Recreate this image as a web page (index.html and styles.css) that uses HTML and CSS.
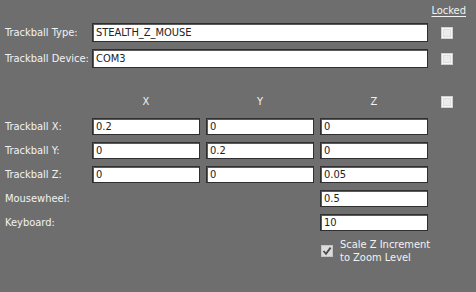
FILE: index.html
```html
<!DOCTYPE html>
<html>
<head>
<meta charset="utf-8">
<link rel="stylesheet" href="styles.css">
</head>
<body>
<div class="panel">
  <div class="locked-row"><span class="locked">Locked</span></div>

  <div class="row top">
    <label class="label">Trackball Type:</label>
    <div class="field wide">STEALTH_Z_MOUSE</div>
    <span class="check disabled"></span>
  </div>
  <div class="row top">
    <label class="label">Trackball Device:</label>
    <div class="field wide">COM3</div>
    <span class="check disabled"></span>
  </div>

  <div class="row head">
    <span class="label"></span>
    <span class="col-head">X</span>
    <span class="col-head">Y</span>
    <span class="col-head">Z</span>
    <span class="check disabled"></span>
  </div>

  <div class="grid">
    <div class="row g">
      <label class="label">Trackball X:</label>
      <div class="field">0.2</div>
      <div class="field">0</div>
      <div class="field">0</div>
    </div>
    <div class="row g">
      <label class="label">Trackball Y:</label>
      <div class="field">0</div>
      <div class="field">0.2</div>
      <div class="field">0</div>
    </div>
    <div class="row g">
      <label class="label">Trackball Z:</label>
      <div class="field">0</div>
      <div class="field">0</div>
      <div class="field">0.05</div>
    </div>
    <div class="row g">
      <label class="label">Mousewheel:</label>
      <span class="spacer"></span>
      <span class="spacer"></span>
      <div class="field">0.5</div>
    </div>
    <div class="row g">
      <label class="label">Keyboard:</label>
      <span class="spacer"></span>
      <span class="spacer"></span>
      <div class="field">10</div>
    </div>
  </div>

  <div class="row scale">
    <span class="label"></span>
    <span class="spacer"></span>
    <span class="spacer"></span>
    <div class="scale-opt">
      <span class="check checked">
        <svg width="10" height="10" viewBox="0 0 10 10"><path d="M1.5 5 L4 7.8 L8.6 1.6" fill="none" stroke="#4a4a4a" stroke-width="1.8"/></svg>
      </span>
      <span class="scale-text">Scale Z Increment<br>to Zoom Level</span>
    </div>
  </div>
</div>
</body>
</html>
```

FILE: styles.css
```css
html, body {
  margin: 0;
  padding: 0;
  background: #6e6e6e;
}

body {
  width: 476px;
  height: 292px;
  overflow: hidden;
  font-family: "DejaVu Sans Condensed", "DejaVu Sans", sans-serif;
  font-stretch: condensed;
  font-size: 11px;
  color: #f2f2f2;
}

.panel {
  display: flex;
  flex-direction: column;
  padding-left: 5px;
}

.locked-row {
  height: 23px;
  display: flex;
  justify-content: flex-end;
  padding-right: 10px;
}

.locked {
  margin-top: 4px;
  text-decoration: underline;
  text-underline-offset: 2px;
  line-height: 13px;
}

.row {
  display: flex;
  align-items: center;
  column-gap: 6px;
}

.label {
  width: 81px;
  flex: none;
  white-space: nowrap;
}

.field {
  box-sizing: border-box;
  width: 108px;
  flex: none;
  background: #ffffff;
  border: 1px solid #2f2f2f;
  box-shadow: inset 1px 1px 0 #5a5a5a;
  color: #222;
  padding-left: 3px;
  white-space: nowrap;
}

.field.wide {
  width: 336px;
}

.top {
  height: 19px;
  margin-bottom: 7px;
}

.top .field {
  height: 19px;
  line-height: 17px;
}

.head {
  margin-top: 21px;
  height: 12px;
}

.col-head {
  width: 108px;
  flex: none;
  text-align: center;
  line-height: 12px;
}

.spacer {
  width: 108px;
  flex: none;
}

.check {
  box-sizing: border-box;
  width: 12px;
  height: 12px;
  flex: none;
  margin-left: 7px;
  background: #ececec;
  border: 1px solid #cfcfcf;
  box-shadow: inset 0 0 0 1px #f7f7f7, inset 0 0 0 2px #dedede;
}

.grid {
  display: flex;
  flex-direction: column;
  row-gap: 7px;
  margin-top: 10px;
}

.g {
  height: 17px;
}

.g .field {
  height: 17px;
  line-height: 15px;
}

.scale {
  margin-top: 7px;
  align-items: flex-start;
}

.scale-opt {
  display: flex;
  align-items: center;
  column-gap: 7px;
}

.check.checked {
  margin-left: 1px;
  display: flex;
  align-items: center;
  justify-content: center;
  background: #dcdcdc;
  border: 1px solid #c4c4c4;
  box-shadow: none;
}

.scale-text {
  line-height: 13px;
}
```
